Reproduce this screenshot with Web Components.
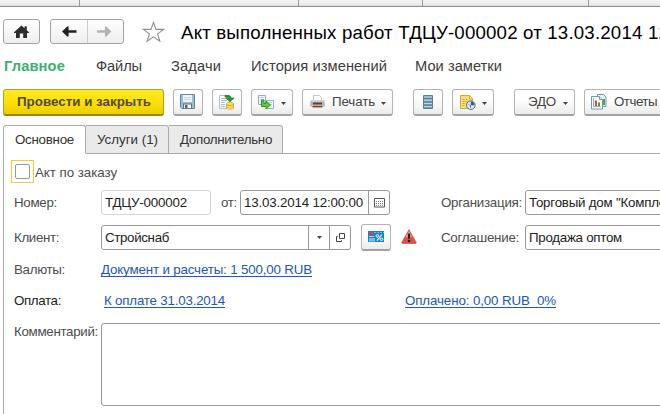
<!DOCTYPE html>
<html lang="ru">
<head>
<meta charset="utf-8">
<title>Акт выполненных работ</title>
<style>
html,body{margin:0;width:660px;height:414px;overflow:hidden;background:#fff;font:13.33px "Liberation Sans",Arial,sans-serif;color:#333}
</style>
</head>
<body>
<act-window></act-window>
<script>
const define = (name, html, setup) => customElements.define(name, class extends HTMLElement {
  connectedCallback() {
    if (this.shadowRoot) return;
    const t = document.createElement('template');
    t.innerHTML = html;
    this.attachShadow({mode: 'open'}).append(t.content.cloneNode(true));
    if (setup) setup(this, this.shadowRoot);
  }
});

/* Text run tracked to a given width */
define('ui-text', `<style>:host{display:block;flex:none;white-space:pre;line-height:16px;height:16px}span{display:inline-block}</style><span><slot></slot></span>`,
  (h, r) => {
    const w = parseFloat(h.getAttribute('w'));
    if (!w) return;
    const s = r.querySelector('span');
    h.style.width = w + 'px';
    s.style.letterSpacing = ((w - s.getBoundingClientRect().width) / h.textContent.length) + 'px';
  });

const icons = {
  home: [16, 14, `<path d="M0 7.2 7.5.6 10.6 3.3V1.2h2.2v4L15 7.2V8H13v5H9.2V8.6H5.8V13H2V8H0z" fill="#2d2d2d"/>`],
  back: [15, 11, `<path d="M0 5.5 5.2.6H6.6V4.2H14.5V6.8H6.6V10.4H5.2z" fill="#222"/>`],
  fwd: [15, 11, `<path d="M14.5 5.5 9.3.6H7.9V4.2H0V6.8H7.9V10.4H9.3z" fill="#b3b3b3"/>`],
  star: [23, 22, `<path d="M11.5 1.4 14 8.4H21.6L15.6 12.9 17.8 20.2 11.5 15.8 5.2 20.2 7.4 12.9 1.4 8.4H9z" fill="#fff" stroke="#8d8d8d" stroke-width="1.1"/>`],
  save: [16, 16, `<path d="M.5.5h14v14H2L.5 13z" fill="#9dbccd" stroke="#64869d"/><path d="M3 1h9v7H3z" fill="#eef6f9"/><path d="M4 3.500h7M4 5.500h7" stroke="#c3d6e0"/><path d="M3 9.500h9v5H3z" fill="#5c7585"/><path d="M4 10.500h7v3.500H4z" fill="#f2f5f7"/><path d="M5 11h2.500v3H5z" fill="#4a6271"/>`],
  post: [16, 17, `<path d="M.5 1.5h10v13H.5z" fill="#f9fcfd" stroke="#a9bfcc"/><path d="M2 4.5h6M2 6.5h6M2 8.5h4M2 10.5h4M2 12.5h4" stroke="#a9bac4"/><path d="M6 1.5h3.5Q12 1.5 12 4h3l-4.2 4L7 4h2.5Q9.5 3 6 3z" fill="#2c9b20" stroke="#167410" stroke-width=".6"/><path d="M7.5 10v4.500q3.500 2.400 7 0V10z" fill="#f2ba2a" stroke="#c8921f" stroke-width=".7"/><ellipse cx="11" cy="9.800" rx="3.500" ry="1.500" fill="#ffe878" stroke="#c9981c" stroke-width=".7"/><path d="M8 12.200q3 1.700 6 0M8 14.400q3 1.700 6 0" stroke="#fff09b" fill="none"/>`],
  based: [17, 15, `<path d="M.5.5h7v9h-7zM8.500 5.500h7v8h-7z" fill="#f3f8fb" stroke="#94afc2"/><path d="M2 2.500h4M2 4.500h4M10 7.500h4M12 9.500h2" stroke="#b9ccd8"/><path d="M3.500 5H6V8.500H8V6L12.500 10 8 14V11.500H3.500z" fill="#55cf3e" stroke="#218c1c" stroke-width=".9"/>`],
  print: [15, 14, `<path d="M3.500 6V.500h6l2 2V6" fill="#fff" stroke="#d0bfb6"/><path d="M1.500 5h12l1.300 2v4.500H.200V7z" fill="#b9b6b7"/><path d="M1.500 6h12" stroke="#e6e3e2"/><path d="M3 7.500h9v2H3z" fill="#4a474a"/><path d="M2 10h11l-1 3.300H3z" fill="#f1c9ac"/><path d="M2.500 11.500h10" stroke="#59443c" stroke-width="1.400"/>`],
  registry: [11, 15, `<path d="M.500.500h9v13h-9z" fill="#7c9fb6" stroke="#5c7f97"/><path d="M1 2h8M1 5.200h8M1 8.500h8M1 11.500h8" stroke="#bdd6e4" stroke-width="1.200"/><path d="M1 3.600h8M1 6.900h8M1 10.200h8" stroke="#4a7189" stroke-width=".700"/>`],
  task: [16, 15, `<path d="M.500.500H9.500L12.500 3.500V13.500H.500z" fill="#f8df7a" stroke="#d2a735"/><path d="M9.500.500v3.500h3" fill="#fff1ad" stroke="#d2a735"/><path d="M2.500 4.500h5M2.500 6.500h7M2.500 8.500h4M2.500 10.500h3" stroke="#c6a342" stroke-dasharray="2 1"/><circle cx="10.800" cy="10.200" r="4.300" fill="#d9edfb" stroke="#41759d"/><path d="M10.800 10.200V6.500A3.700 3.700 0 0 1 14.500 10.200z" fill="#245fa1"/><path d="M10.500 10.500 7.800 9" stroke="#8ab6d4"/><path d="M10.500 10v3" stroke="#d64a39"/>`],
  reports: [17, 16, `<path d="M6.500.500h6l2.500 2.500V12.500h-8.500z" fill="#e8f2f7" stroke="#7898ad"/><path d="M13 5v6" stroke="#4da646" stroke-width="2"/><path d="M.500 2.500h8l3 3v9.500H.500z" fill="#fff" stroke="#7898ad"/><path d="M8.500 2.500v3h3" fill="#dceaf1" stroke="#7898ad"/><path d="M2.500 4v8.500h7" fill="none" stroke="#9babb5"/><path d="M4 6.500h2V12H4z" fill="#d94a3a"/><path d="M7 8.500h2V12H7z" fill="#36a33d"/>`],
  calendar: [11, 10, `<path d="M.500.500h10v8.500H.500z" fill="#fff" stroke="#555"/><path d="M2 3.500h7M2 5.500h7M2 7.300h7" stroke="#777" stroke-dasharray="1 1"/>`],
  open: [9, 9, `<path d="M3.500.500h5v5h-5zM1.700 3.500H.500v5h5V7.300" fill="none" stroke="#444"/>`],
  caret: [5, 3, `<path d="M0 0h5L2.500 3z" fill="#444"/>`],
  discount: [16, 11, `<path d="M0 0h16v11H0z" fill="#1683cb"/><path d="M1.500 1h3.500v3H1.500z" fill="#e2413b"/><path d="M6 1.500h10" stroke="#69bced" stroke-dasharray="2 1"/><path d="M1 5.500h5" stroke="#a9d8f2"/><path d="M2 7v3.500M4 7v3.500M6 7v3.500" stroke="#e4f4fc"/><circle cx="9.300" cy="4.900" r="1.300" fill="none" stroke="#fff"/><circle cx="13.500" cy="8.200" r="1.300" fill="none" stroke="#fff"/><path d="M13.800 3.500 9 9.700" stroke="#fff" stroke-width="1.100"/>`],
  warn: [16, 15, `<path d="M8 .700 15.200 13.400q.200 1-.700 1H1.500q-1 0-.700-1z" fill="#d9564a" stroke="#b9473b" stroke-width=".700"/><path d="M8 2 11 7.500 4.500 8z" fill="#f1a39a"/><path d="M6.700 4.500h2.600L8.700 10H7.300z" fill="#2f1b1a"/><circle cx="8" cy="12" r="1.300" fill="#2f1b1a"/>`]
};
define('ui-icon', `<style>:host{display:block;flex:none}svg{display:block}</style>`, (h, r) => {
  const [w, ht, body] = icons[h.getAttribute('name')];
  r.innerHTML += `<svg width="${w}" height="${ht}" viewBox="0 0 ${w} ${ht}">${body}</svg>`;
});

define('ui-button', `<style>:host{display:flex;flex:none;box-sizing:border-box;align-items:center;height:27px;border:1px solid #b4b4b4;border-bottom:2px solid #a2a2a2;border-radius:3px;background:linear-gradient(#fff 35%,#ececec);color:#444}
:host([kind=primary]){border-color:#b59e20 #b59e20 #9a8412;background:linear-gradient(#ffe925,#fbdd00 60%,#edce00);color:#504b38;font-weight:bold}
:host([kind=nav]){height:25px;border:1px solid #a3a3a3;background:linear-gradient(#fff,#eee)}</style><slot></slot>`);

define('ui-field', `<style>:host{display:flex;flex:none;box-sizing:border-box;height:25px;border:1px solid #999;border-radius:3px;background:#fff;color:#222}
:host([readonly]){border-color:#d4d4d4}.v{flex:1;min-width:0;padding:4px 0 0 3px}::slotted([slot=end]){display:flex;align-items:center;justify-content:center;border-left:1px solid #999;box-sizing:border-box}</style><div class="v"><slot></slot></div><slot name="end"></slot>`);

define('ui-link', `<style>:host{display:block;flex:none;color:#2257b8;border-bottom:1px solid #2257b8;height:16px}</style><slot></slot>`);

define('ui-tab', `<style>:host{display:block;flex:none;box-sizing:border-box;height:29px;border:1px solid #aaa;border-left-width:0;border-radius:0 3px 0 0;background:#eaeaea;padding:6px 0 0 12px}
:host([active]){border-left-width:1px;border-bottom-color:#fff;border-radius:3px 3px 0 0;background:#fff;padding-left:11px}</style><slot></slot>`);

define('ui-check', `<style>:host{display:block;box-sizing:border-box;flex:none;width:23px;height:23px;border:1px solid #f5c836;padding:3px}i{display:block;box-sizing:border-box;width:15px;height:15px;border:1px solid #999;border-radius:2px;background:#fff}</style><i></i>`);

define('act-window', `<style>
:host{display:flex;flex-direction:column;width:660px;height:414px;overflow:hidden;background:#fff}
.strip{display:grid;grid-template-columns:80px 219px 124px 166px 1fr;height:7px;flex:none;box-sizing:border-box;background:linear-gradient(#f1f1f1 50%,#dedede);border-bottom:1px solid #919191}
.strip i{border-right:1px solid #999}.strip i:last-child{border:0}
.head{display:flex;height:25px;margin:12px 0 0 3px;flex:none;align-items:center}
.nav{width:74px;margin-left:10px}
.nav i{width:1px;height:23px;background:#ccc;margin-left:10px;margin-right:9px}
.title{font-size:18.67px;color:#000;line-height:24px;height:24px}
.menu{display:flex;margin:14px 0 0 4px;height:17px;flex:none;font-size:14.67px;color:#3c3c3c}
.bar{display:flex;margin:14px 0 0 3px;height:27px;flex:none}
.tabs{display:flex;margin:9px 0 0 3px;height:29px;flex:none}
.tabs b{flex:1;border-bottom:1px solid #aaa}
.panel{flex:1;min-height:0;margin-left:3px;border-left:1px solid #aaa;color:#4d4d4d}
.row{display:flex;align-items:flex-start}
.l{width:87px;padding:5px 0 0 10px;flex:none;box-sizing:content-box}
</style>
<div class="strip"><i></i><i></i><i></i><i></i><i></i></div>
<div class="head">
 <ui-button kind="nav" style="width:37px"><ui-icon name="home" style="margin-left:10px"></ui-icon></ui-button>
 <ui-button kind="nav" class="nav"><ui-icon name="back" style="margin-left:11px"></ui-icon><i></i><ui-icon name="fwd"></ui-icon></ui-button>
 <ui-icon name="star" style="margin:1px 0 0 18px"></ui-icon>
 <ui-text class="title" w="488" style="margin:2px 0 0 16px">Акт выполненных работ ТДЦУ-000002 от 13.03.2014 12</ui-text>
</div>
<div class="menu">
 <ui-text w="61" style="color:#3fae70;font-weight:bold">Главное</ui-text>
 <ui-text w="46" style="margin-left:31px">Файлы</ui-text>
 <ui-text w="50" style="margin-left:29px">Задачи</ui-text>
 <ui-text w="136" style="margin-left:30px">История изменений</ui-text>
 <ui-text w="87" style="margin-left:28px">Мои заметки</ui-text>
</div>
<div class="bar">
 <ui-button kind="primary" style="width:161px"><ui-text w="134" style="margin-left:13px">Провести и закрыть</ui-text></ui-button>
 <ui-button style="width:30px;margin-left:9px"><ui-icon name="save" style="margin-left:6px"></ui-icon></ui-button>
 <ui-button style="width:30px;margin-left:9px"><ui-icon name="post" style="margin-left:6px"></ui-icon></ui-button>
 <ui-button style="width:42px;margin-left:9px"><ui-icon name="based" style="margin-left:6px"></ui-icon><ui-icon name="caret" style="margin:3px 0 0 6px"></ui-icon></ui-button>
 <ui-button style="width:91px;margin-left:9px"><ui-icon name="print" style="margin-left:7px"></ui-icon><ui-text w="43" style="margin-left:7px">Печать</ui-text><ui-icon name="caret" style="margin:3px 0 0 6px"></ui-icon></ui-button>
 <ui-button style="width:30px;margin-left:20px"><ui-icon name="registry" style="margin-left:9px"></ui-icon></ui-button>
 <ui-button style="width:42px;margin-left:9px"><ui-icon name="task" style="margin-left:7px"></ui-icon><ui-icon name="caret" style="margin:3px 0 0 6px"></ui-icon></ui-button>
 <ui-button style="width:61px;margin-left:20px"><ui-text w="28" style="margin-left:13px">ЭДО</ui-text><ui-icon name="caret" style="margin:3px 0 0 7px"></ui-icon></ui-button>
 <ui-button style="width:101px;margin-left:9px"><ui-icon name="reports" style="margin-left:6px"></ui-icon><ui-text w="43" style="margin-left:6px">Отчеты</ui-text></ui-button>
</div>
<div class="tabs">
 <ui-tab active style="width:83px"><ui-text w="59">Основное</ui-text></ui-tab>
 <ui-tab style="width:83px"><ui-text w="61" style="margin-left:-1px">Услуги (1)</ui-text></ui-tab>
 <ui-tab style="width:114px"><ui-text w="92" style="margin-left:-1px">Дополнительно</ui-text></ui-tab><b></b>
</div>
<div class="panel">
 <div class="row" style="margin:6px 0 0 7px"><ui-check></ui-check><ui-text w="82" style="margin:5px 0 0 1px">Акт по заказу</ui-text></div>
 <div class="row" style="margin-top:7px">
  <div class="l"><ui-text w="43">Номер:</ui-text></div>
  <ui-field readonly style="width:110px"><ui-text w="82">ТДЦУ-000002</ui-text></ui-field>
  <ui-text w="16" style="margin:5px 0 0 10px">от:</ui-text>
  <ui-field style="width:150px;margin-left:3px"><ui-text w="119">13.03.2014 12:00:00</ui-text><span slot="end" style="width:21px"><ui-icon name="calendar"></ui-icon></span></ui-field>
  <ui-text w="81" style="margin:5px 0 0 51px">Организация:</ui-text>
  <ui-field style="width:150px;margin-left:3px"><ui-text w="137">Торговый дом "Компле</ui-text></ui-field>
 </div>
 <div class="row" style="margin-top:10px">
  <div class="l"><ui-text w="45">Клиент:</ui-text></div>
  <ui-field style="width:250px"><ui-text w="64">Стройснаб</ui-text><span slot="end" style="width:21px"><ui-icon name="caret"></ui-icon></span><span slot="end" style="width:21px"><ui-icon name="open"></ui-icon></span></ui-field>
  <ui-button style="width:30px;margin:-1px 0 -1px 10px"><ui-icon name="discount" style="margin:-1px 0 0 6px"></ui-icon></ui-button>
  <ui-icon name="warn" style="margin:4px 0 0 10px"></ui-icon>
  <ui-text w="78" style="margin:5px 0 0 24px">Соглашение:</ui-text>
  <ui-field style="width:150px;margin-left:6px"><ui-text w="93">Продажа оптом</ui-text></ui-field>
 </div>
 <div class="row" style="margin-top:7px"><div class="l"><ui-text w="51">Валюты:</ui-text></div><ui-link style="margin-top:3px"><ui-text w="211" style="margin-top:2px;margin-bottom:-2px">Документ и расчеты: 1 500,00 RUB</ui-text></ui-link></div>
 <div class="row" style="margin-top:10px"><div class="l" style="color:#222"><ui-text w="47">Оплата:</ui-text></div><ui-link style="margin:3px 0 0 3px"><ui-text w="121" style="margin-top:2px;margin-bottom:-2px">К оплате 31.03.2014</ui-text></ui-link><ui-link style="margin:3px 0 0 180px"><ui-text w="151" style="margin-top:2px;margin-bottom:-2px">Оплачено: 0,00 RUB  0%</ui-text></ui-link></div>
 <div class="row" style="margin-top:10px"><div class="l"><ui-text w="84">Комментарий:</ui-text></div><ui-field style="width:575px;height:83px;margin-top:4px"></ui-field></div>
</div>`);
</script>
</body>
</html>
